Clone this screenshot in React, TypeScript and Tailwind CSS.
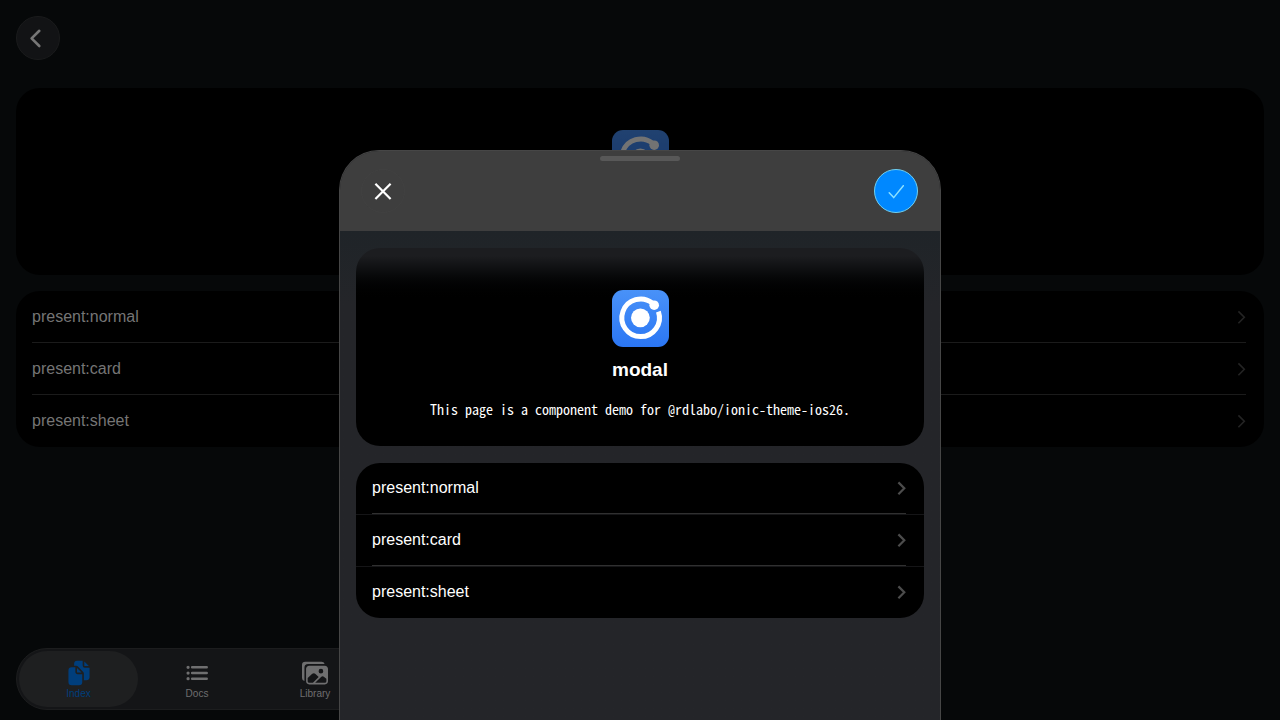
import { IoDocuments, IoImages, IoList } from "react-icons/io5";

const items = ["present:normal", "present:card", "present:sheet"];

function Logo({ id, dim = false }: { id: string; dim?: boolean }) {
  return (
    <svg viewBox="0 0 57 57" className={dim ? "size-[57px] opacity-45" : "size-[57px]"} aria-hidden="true">
      <defs>
        <linearGradient id={id} x1="0" y1="0" x2="0" y2="1">
          <stop offset="0" stopColor="#4992f8" />
          <stop offset="1" stopColor="#2b76f4" />
        </linearGradient>
      </defs>
      <rect width="57" height="57" rx="11" fill={`url(#${id})`} />
      <circle cx="28.4" cy="27.8" r="9.4" fill="#fff" />
      <path
        d="M40.5 13.2 A18.8 18.8 0 1 0 46.4 21.6"
        fill="none"
        stroke="#fff"
        strokeWidth="5"
      />
      <circle cx="42.2" cy="15.2" r="4.8" fill="#fff" />
    </svg>
  );
}

function Chevron({ className }: { className: string }) {
  return (
    <svg
      viewBox="0 0 10 16"
      className={`h-4 w-2.5 ${className}`}
      fill="none"
      stroke="currentColor"
      aria-hidden="true"
    >
      <path d="M2.4 2.4 8.3 8.3 2.4 14.2" />
    </svg>
  );
}

function Intro({ modal = false }: { modal?: boolean }) {
  return (
    <section
      className={
        modal
          ? "flex h-[198px] flex-col items-center rounded-3xl bg-linear-to-b from-[#1c1d20] from-4% via-[#08090a] via-14% to-black to-28% pt-[42px] text-white"
          : "flex h-[187px] flex-col items-center rounded-3xl bg-black pt-[42px] text-[#777]"
      }
    >
      <Logo id={modal ? "logo-modal" : "logo-page"} dim={!modal} />
      <h2 className="mt-[11px] text-[19px] leading-6 font-bold">modal</h2>
      <p className="mt-4 font-['Noto_Sans_Mono_CJK_JP','Noto_Sans_CJK_JP',monospace] text-sm leading-[22px] font-normal">
        This page is a component demo for @rdlabo/ionic-theme-ios26.
      </p>
    </section>
  );
}

function PageList() {
  return (
    <ul className="mt-4 overflow-hidden rounded-3xl bg-black text-[#757575]">
      {items.map((item, i) => (
        <li key={item} className="pl-4">
          <button
            className={`flex h-[52px] w-[calc(100%-18px)] items-center justify-between border-b text-left ${
              i < items.length - 1 ? "border-[#1b1b1b]" : "border-transparent"
            }`}
          >
            {item}
            <Chevron className="stroke-[1.6] text-[#242424]" />
          </button>
        </li>
      ))}
    </ul>
  );
}

function ModalList() {
  return (
    <ul className="mt-[17px] divide-y divide-[#151517] overflow-hidden rounded-3xl bg-black text-white">
      {items.map((item, i) => (
        <li key={item} className="pl-4">
          <button
            className={`flex h-[51px] w-[calc(100%-18px)] items-center justify-between border-b text-left ${
              i < items.length - 1 ? "border-[#303030]" : "border-transparent"
            }`}
          >
            {item}
            <Chevron className="stroke-[2.2] text-[#4c4c4c]" />
          </button>
        </li>
      ))}
    </ul>
  );
}

export default function App() {
  return (
    <div className="relative flex min-h-screen flex-col overflow-hidden bg-[#060809] font-['Liberation_Sans',Arial,sans-serif] text-base">
      <header className="px-4 pt-4">
        <button
          aria-label="Back"
          className="flex size-11 items-center justify-center rounded-full border border-[#1a1b1c] bg-[#121315] text-[#777]"
        >
          <svg viewBox="0 0 24 24" className="size-6" fill="none" stroke="currentColor" strokeWidth="2.6" strokeLinecap="round" strokeLinejoin="round" aria-hidden="true">
            <path d="M13.3 4.8 5.6 12.4 13.3 20" />
          </svg>
        </button>
      </header>

      <main className="flex-1 px-4 pt-7">
        <Intro />
        <PageList />
      </main>

      <nav className="mb-2.5 ml-4 flex h-[62px] w-fit rounded-full border border-[#1c1d1e] bg-[#141517] p-0.5 text-[10px] leading-3 text-[#6f6f70]">
        <a
          href="#index"
          className="flex w-[119px] flex-col items-center justify-center gap-0.5 rounded-full bg-[#1e1f20] pt-0.5 text-[#003e7c]"
        >
          <IoDocuments className="size-[26px]" />
          Index
        </a>
        <a href="#docs" className="flex w-[118px] flex-col items-center justify-center gap-0.5 pt-0.5">
          <IoList className="size-[26px]" />
          Docs
        </a>
        <a href="#library" className="flex w-[118px] flex-col items-center justify-center gap-0.5 pt-0.5">
          <IoImages className="size-[26px]" />
          Library
        </a>
      </nav>

      <div className="fixed inset-0 flex items-end justify-center">
        <div
          role="dialog"
          aria-modal="true"
          aria-label="modal"
          className="flex h-[570px] w-full max-w-[602px] flex-col overflow-hidden rounded-t-[40px] border border-b-0 border-[#464646] bg-[#242529]"
        >
          <header className="flex h-20 shrink-0 flex-col bg-[#3e3e3e]">
            <div className="mx-auto mt-[5px] h-[5px] w-20 shrink-0 rounded-full bg-[#585858]" />
            <div className="mt-2 flex items-center justify-between pr-[22px] pl-[21px]">
              <button
                aria-label="Close"
                className="flex size-11 items-center justify-center rounded-full border border-[#414141] text-white"
              >
                <svg viewBox="0 0 24 24" className="size-6" fill="none" stroke="currentColor" strokeWidth="2.2" aria-hidden="true">
                  <path d="M4.4 4.8 19.6 20M19.6 4.8 4.4 20" />
                </svg>
              </button>
              <button
                aria-label="Confirm"
                className="flex size-11 items-center justify-center rounded-full border border-[#70d0f0] bg-[#0088ff] text-[#8be0ff]"
              >
                <svg viewBox="0 0 24 24" className="size-6" fill="none" stroke="currentColor" strokeWidth="1.5" strokeLinecap="round" strokeLinejoin="round" aria-hidden="true">
                  <path d="M19.3 6.7 9.7 18.6 5.2 13.8" />
                </svg>
              </button>
            </div>
          </header>
          <div className="flex-1 bg-linear-to-b from-[#1f2428] to-[#242529] to-15% px-4 pt-[17px]">
            <Intro modal />
            <ModalList />
          </div>
        </div>
      </div>
    </div>
  );
}
